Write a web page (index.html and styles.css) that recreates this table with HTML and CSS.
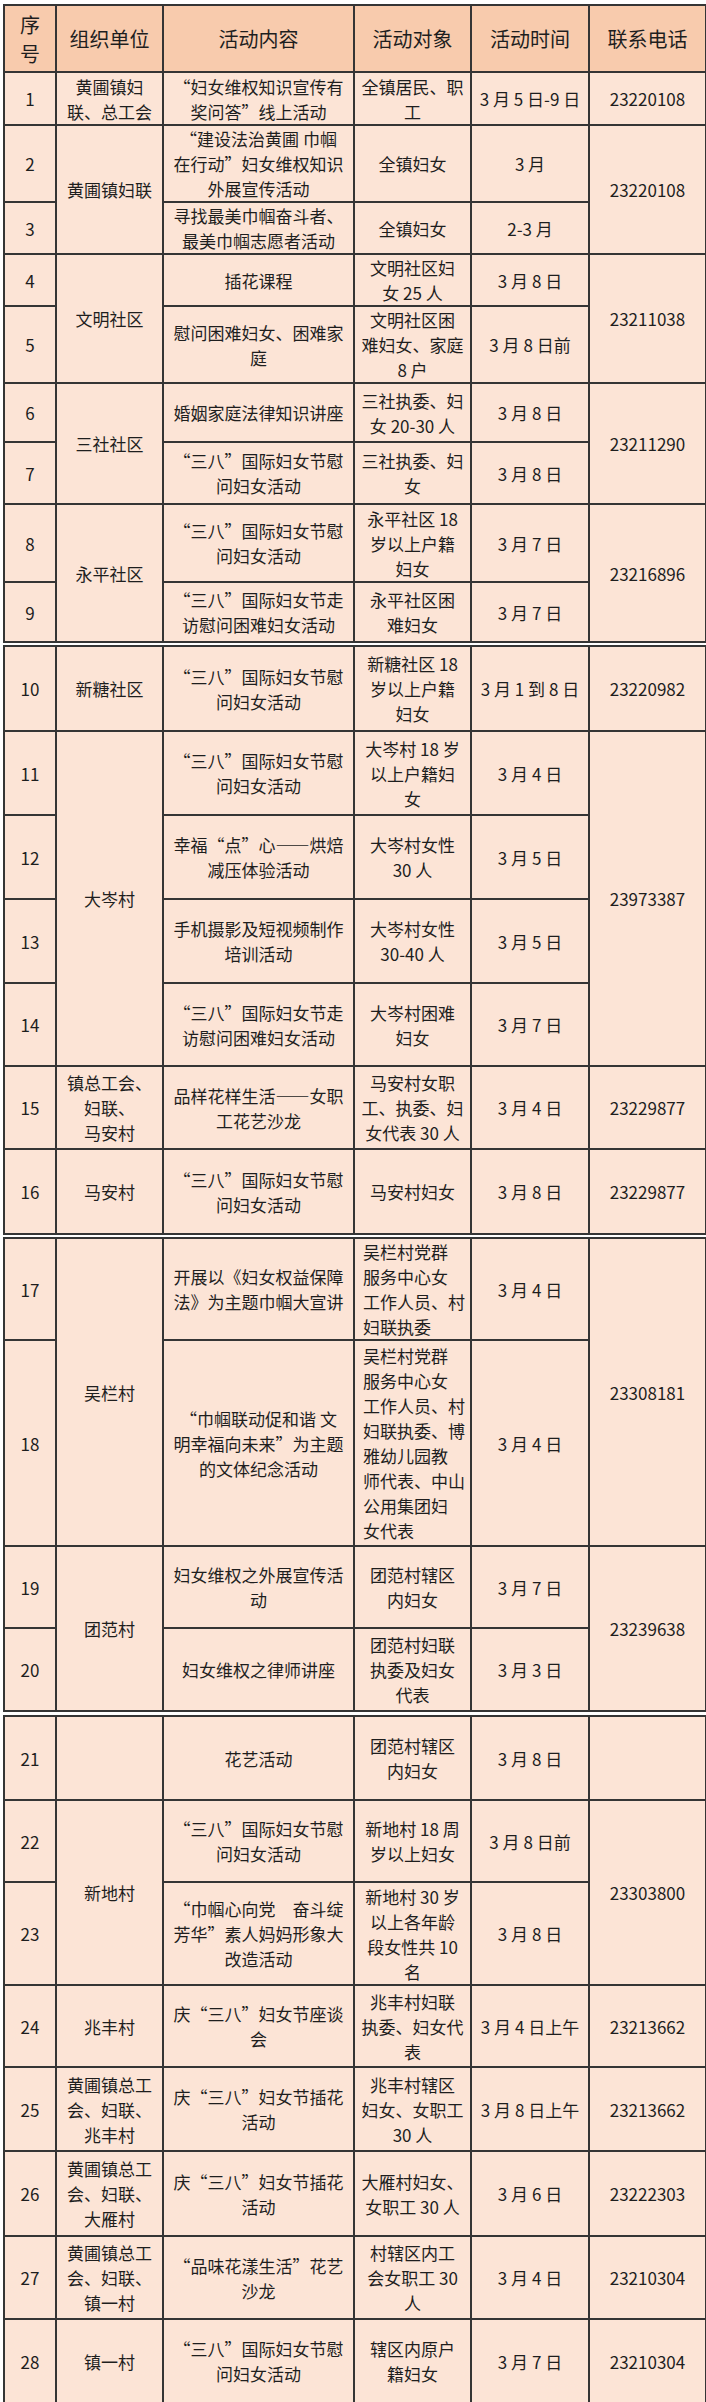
FILE: index.html
```html
<!DOCTYPE html>
<html lang="zh-CN">
<head>
<meta charset="utf-8">
<title>三八妇女节活动安排表</title>
<link rel="stylesheet" href="styles.css">
</head>
<body>
<main class="sheet">
  <table class="grid first">
    <colgroup><col class="c-no"><col class="c-org"><col class="c-act"><col class="c-obj"><col class="c-time"><col class="c-tel"></colgroup>
    <thead>
      <tr class="h67 head"><th class="no-head">序号</th><th>组织单位</th><th>活动内容</th><th>活动对象</th><th>活动时间</th><th>联系电话</th></tr>
    </thead>
    <tbody>
      <tr class="h53"><td>1</td><td>黄圃镇妇<br>联、总工会</td><td>“妇女维权知识宣传有<br>奖问答”线上活动</td><td>全镇居民、职<br>工</td><td>3 月 5 日-9 日</td><td>23220108</td></tr>
      <tr class="h76"><td>2</td><td rowspan="2">黄圃镇妇联</td><td>“建设法治黄圃 巾帼<br>在行动”妇女维权知识<br>外展宣传活动</td><td>全镇妇女</td><td>3 月</td><td rowspan="2">23220108</td></tr>
      <tr class="h52"><td>3</td><td>寻找最美巾帼奋斗者、<br>最美巾帼志愿者活动</td><td>全镇妇女</td><td>2-3 月</td></tr>
      <tr class="h52"><td>4</td><td rowspan="2">文明社区</td><td>插花课程</td><td>文明社区妇<br>女 25 人</td><td>3 月 8 日</td><td rowspan="2">23211038</td></tr>
      <tr class="h77"><td>5</td><td>慰问困难妇女、困难家<br>庭</td><td>文明社区困<br>难妇女、家庭<br>8 户</td><td>3 月 8 日前</td></tr>
      <tr class="h59"><td>6</td><td rowspan="2">三社社区</td><td>婚姻家庭法律知识讲座</td><td>三社执委、妇<br>女 20-30 人</td><td>3 月 8 日</td><td rowspan="2">23211290</td></tr>
      <tr class="h62"><td>7</td><td>“三八”国际妇女节慰<br>问妇女活动</td><td>三社执委、妇<br>女</td><td>3 月 8 日</td></tr>
      <tr class="h78"><td>8</td><td rowspan="2">永平社区</td><td>“三八”国际妇女节慰<br>问妇女活动</td><td>永平社区 18<br>岁以上户籍<br>妇女</td><td>3 月 7 日</td><td rowspan="2">23216896</td></tr>
      <tr class="h60"><td>9</td><td>“三八”国际妇女节走<br>访慰问困难妇女活动</td><td>永平社区困<br>难妇女</td><td>3 月 7 日</td></tr>
    </tbody>
  </table>

  <table class="grid gap2">
    <colgroup><col class="c-no"><col class="c-org"><col class="c-act"><col class="c-obj"><col class="c-time"><col class="c-tel"></colgroup>
    <tbody>
      <tr class="h85"><td>10</td><td>新糖社区</td><td>“三八”国际妇女节慰<br>问妇女活动</td><td>新糖社区 18<br>岁以上户籍<br>妇女</td><td>3 月 1 到 8 日</td><td>23220982</td></tr>
      <tr class="h84"><td>11</td><td rowspan="4">大岑村</td><td>“三八”国际妇女节慰<br>问妇女活动</td><td>大岑村 18 岁<br>以上户籍妇<br>女</td><td>3 月 4 日</td><td rowspan="4">23973387</td></tr>
      <tr class="h84"><td>12</td><td>幸福“点”心——烘焙<br>减压体验活动</td><td>大岑村女性<br>30 人</td><td>3 月 5 日</td></tr>
      <tr class="h84"><td>13</td><td>手机摄影及短视频制作<br>培训活动</td><td>大岑村女性<br>30-40 人</td><td>3 月 5 日</td></tr>
      <tr class="h83"><td>14</td><td>“三八”国际妇女节走<br>访慰问困难妇女活动</td><td>大岑村困难<br>妇女</td><td>3 月 7 日</td></tr>
      <tr class="h83"><td>15</td><td>镇总工会、<br>妇联、<br>马安村</td><td>品样花样生活——女职<br>工花艺沙龙</td><td>马安村女职<br>工、执委、妇<br>女代表 30 人</td><td>3 月 4 日</td><td>23229877</td></tr>
      <tr class="h85"><td>16</td><td>马安村</td><td>“三八”国际妇女节慰<br>问妇女活动</td><td>马安村妇女</td><td>3 月 8 日</td><td>23229877</td></tr>
    </tbody>
  </table>

  <table class="grid gap2">
    <colgroup><col class="c-no"><col class="c-org"><col class="c-act"><col class="c-obj"><col class="c-time"><col class="c-tel"></colgroup>
    <tbody>
      <tr class="h102"><td>17</td><td rowspan="2">吴栏村</td><td>开展以《妇女权益保障<br>法》为主题巾帼大宣讲</td><td class="left">吴栏村党群<br>服务中心女<br>工作人员、村<br>妇联执委</td><td>3 月 4 日</td><td rowspan="2">23308181</td></tr>
      <tr class="h206"><td>18</td><td>“巾帼联动促和谐 文<br>明幸福向未来”为主题<br>的文体纪念活动</td><td class="left">吴栏村党群<br>服务中心女<br>工作人员、村<br>妇联执委、博<br>雅幼儿园教<br>师代表、中山<br>公用集团妇<br>女代表</td><td>3 月 4 日</td></tr>
      <tr class="h82"><td>19</td><td rowspan="2">团范村</td><td>妇女维权之外展宣传活<br>动</td><td>团范村辖区<br>内妇女</td><td>3 月 7 日</td><td rowspan="2">23239638</td></tr>
      <tr class="h83"><td>20</td><td>妇女维权之律师讲座</td><td>团范村妇联<br>执委及妇女<br>代表</td><td>3 月 3 日</td></tr>
    </tbody>
  </table>

  <table class="grid gap3">
    <colgroup><col class="c-no"><col class="c-org"><col class="c-act"><col class="c-obj"><col class="c-time"><col class="c-tel"></colgroup>
    <tbody>
      <tr class="h84"><td>21</td><td></td><td>花艺活动</td><td>团范村辖区<br>内妇女</td><td>3 月 8 日</td><td></td></tr>
      <tr class="h82"><td>22</td><td rowspan="2">新地村</td><td>“三八”国际妇女节慰<br>问妇女活动</td><td>新地村 18 周<br>岁以上妇女</td><td>3 月 8 日前</td><td rowspan="2">23303800</td></tr>
      <tr class="h103"><td>23</td><td>“巾帼心向党　奋斗绽<br>芳华”素人妈妈形象大<br>改造活动</td><td>新地村 30 岁<br>以上各年龄<br>段女性共 10<br>名</td><td>3 月 8 日</td></tr>
      <tr class="h82"><td>24</td><td>兆丰村</td><td>庆“三八”妇女节座谈<br>会</td><td>兆丰村妇联<br>执委、妇女代<br>表</td><td>3 月 4 日上午</td><td>23213662</td></tr>
      <tr class="h84"><td>25</td><td>黄圃镇总工<br>会、妇联、<br>兆丰村</td><td>庆“三八”妇女节插花<br>活动</td><td>兆丰村辖区<br>妇女、女职工<br>30 人</td><td>3 月 8 日上午</td><td>23213662</td></tr>
      <tr class="h85"><td>26</td><td>黄圃镇总工<br>会、妇联、<br>大雁村</td><td>庆“三八”妇女节插花<br>活动</td><td>大雁村妇女、<br>女职工 30 人</td><td>3 月 6 日</td><td>23222303</td></tr>
      <tr class="h83"><td>27</td><td>黄圃镇总工<br>会、妇联、<br>镇一村</td><td>“品味花漾生活”花艺<br>沙龙</td><td>村辖区内工<br>会女职工 30<br>人</td><td>3 月 4 日</td><td>23210304</td></tr>
      <tr class="h84"><td>28</td><td>镇一村</td><td>“三八”国际妇女节慰<br>问妇女活动</td><td>辖区内原户<br>籍妇女</td><td>3 月 7 日</td><td>23210304</td></tr>
    </tbody>
  </table>
</main>
</body>
</html>
```

FILE: styles.css
```css
html, body {
  margin: 0;
  padding: 0;
  background: #ffffff;
}

body {
  font-family: "Noto Sans CJK SC", "Noto Sans", sans-serif;
  color: #1e1e1e;
}

.sheet {
  padding: 4px 0 0 3px;
  width: 702px;
}

.grid {
  width: 702px;
  table-layout: fixed;
  border-collapse: collapse;
  background: #fce4d6;
  font-size: 17px;
  line-height: 25px;
}

.gap2 { margin-top: 2px; }
.gap3 { margin-top: 3px; }

.c-no   { width: 52px; }
.c-org  { width: 107px; }
.c-act  { width: 191px; }
.c-obj  { width: 117px; }
.c-time { width: 118px; }
.c-tel  { width: 117px; }

.grid th,
.grid td {
  border: 2px solid #353535;
  padding: 0 2px;
  text-align: center;
  vertical-align: middle;
  white-space: nowrap;
  font-weight: 400;
}

.grid td.left {
  text-align: left;
  padding-left: 8px;
}

.head th {
  background: #f8cbad;
  font-size: 20px;
  line-height: 24px;
}

.head th.no-head {
  white-space: normal;
  padding: 0 12px;
  line-height: 29px;
}

.h52 { height: 52px; }
.h53 { height: 53px; }
.h59 { height: 59px; }
.h60 { height: 60px; }
.h62 { height: 62px; }
.h67 { height: 67px; }
.h76 { height: 76px; }
.h77 { height: 77px; }
.h78 { height: 78px; }
.h82 { height: 82px; }
.h83 { height: 83px; }
.h84 { height: 84px; }
.h85 { height: 85px; }
.h102 { height: 102px; }
.h103 { height: 103px; }
.h206 { height: 206px; }
```
